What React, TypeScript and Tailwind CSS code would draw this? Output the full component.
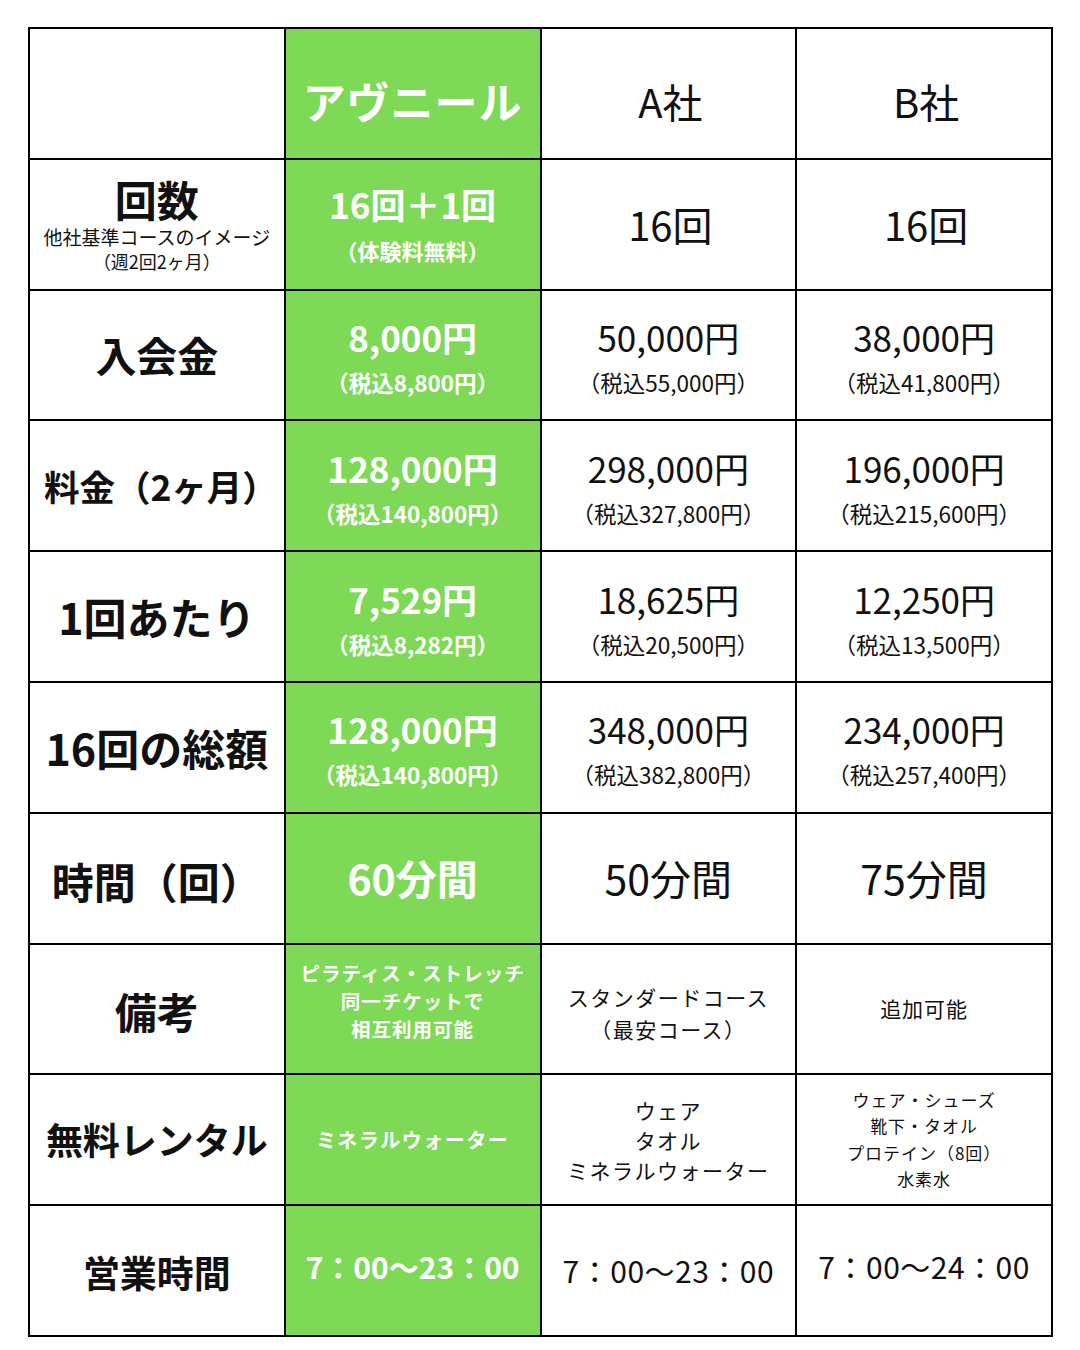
const font = { fontFamily: '"Noto Sans CJK JP", "Noto Sans", sans-serif' };

type Price = { main: string; sub: string };

const priceRows: { label: string; labelCls: string; ours: Price; oursCls?: string; a: Price; b: Price }[] = [
  {
    label: '入会金',
    labelCls: 'text-[41px]',
    ours: { main: '8,000円', sub: '（税込8,800円）' },
    oursCls: 'font-semibold',
    a: { main: '50,000円', sub: '（税込55,000円）' },
    b: { main: '38,000円', sub: '（税込41,800円）' },
  },
  {
    label: '料金（2ヶ月）',
    labelCls: 'text-[35.5px] pl-2',
    ours: { main: '128,000円', sub: '（税込140,800円）' },
    a: { main: '298,000円', sub: '（税込327,800円）' },
    b: { main: '196,000円', sub: '（税込215,600円）' },
  },
  {
    label: '1回あたり',
    labelCls: 'text-[43px]',
    ours: { main: '7,529円', sub: '（税込8,282円）' },
    a: { main: '18,625円', sub: '（税込20,500円）' },
    b: { main: '12,250円', sub: '（税込13,500円）' },
  },
  {
    label: '16回の総額',
    labelCls: 'text-[43px]',
    ours: { main: '128,000円', sub: '（税込140,800円）' },
    a: { main: '348,000円', sub: '（税込382,800円）' },
    b: { main: '234,000円', sub: '（税込257,400円）' },
  },
];

function Cell({ green, className = '', children }: { green?: boolean; className?: string; children?: React.ReactNode }) {
  return (
    <div
      className={`flex flex-col items-center justify-center text-center ${
        green ? 'bg-[#7ed957] text-white' : 'bg-white text-[#111]'
      } ${className}`}
    >
      {children}
    </div>
  );
}

function PriceCell({ p, green, cls = '' }: { p: Price; green?: boolean; cls?: string }) {
  return (
    <Cell green={green} className="pt-[10px]">
      <div className={`text-[35px] leading-[44px] ${green ? 'font-bold' : ''} ${cls}`}>{p.main}</div>
      <div className={`text-[22.5px] leading-[46px] ${green ? 'font-bold' : ''} ${cls}`}>{p.sub}</div>
    </Cell>
  );
}

export default function App() {
  return (
    <div className="w-[1080px] h-[1350px] bg-white pt-[27px] pl-[28px]" style={font}>
      <div className="grid grid-cols-4 grid-rows-[repeat(10,minmax(0,1fr))] gap-[2px] p-[2px] bg-black w-[1025px] h-[1310px]">
        {/* header */}
        <Cell />
        <Cell green className="pt-[14px]">
          <div className="text-[43px] font-bold tracking-[1px]">アヴニール</div>
        </Cell>
        <Cell className="pt-4 pl-1">
          <div className="text-[40px]">A社</div>
        </Cell>
        <Cell className="pt-4 pl-1">
          <div className="text-[40px]">B社</div>
        </Cell>

        {/* 回数 */}
        <Cell>
          <div className="text-[42px] font-bold leading-[50px]">回数</div>
          <div className="text-[19px] leading-[25px]">他社基準コースのイメージ</div>
          <div className="text-[18px] leading-[25px]">（週2回2ヶ月）</div>
        </Cell>
        <Cell green className="pt-2">
          <div className="text-[35px] font-bold leading-[44px]">16回＋1回</div>
          <div className="text-[22px] font-bold leading-[48px]">（体験料無料）</div>
        </Cell>
        <Cell className="pl-1">
          <div className="text-[40px]">16回</div>
        </Cell>
        <Cell className="pl-1">
          <div className="text-[40px]">16回</div>
        </Cell>

        {priceRows.map((r) => (
          <div key={r.label} className="contents">
            <Cell>
              <div className={`font-bold ${r.labelCls}`}>{r.label}</div>
            </Cell>
            <PriceCell p={r.ours} green cls={r.oursCls} />
            <PriceCell p={r.a} />
            <PriceCell p={r.b} />
          </div>
        ))}

        {/* 時間 */}
        <Cell className="pt-1">
          <div className="text-[42px] font-bold">時間（回）</div>
        </Cell>
        <Cell green>
          <div className="text-[41px] font-bold">60分間</div>
        </Cell>
        <Cell>
          <div className="text-[41px]">50分間</div>
        </Cell>
        <Cell>
          <div className="text-[41px]">75分間</div>
        </Cell>

        {/* 備考 */}
        <Cell className="pt-1">
          <div className="text-[42px] font-bold">備考</div>
        </Cell>
        <Cell green className="pb-4">
          <div className="text-[19.5px] font-bold leading-[28px] tracking-[1px]">
            ピラティス・ストレッチ
            <br />
            同一チケットで
            <br />
            相互利用可能
          </div>
        </Cell>
        <Cell className="pt-2">
          <div className="text-[21px] leading-[32px] tracking-[1.5px]">
            スタンダードコース
            <br />
            （最安コース）
          </div>
        </Cell>
        <Cell>
          <div className="text-[21px] tracking-[1px]">追加可能</div>
        </Cell>

        {/* 無料レンタル */}
        <Cell>
          <div className="text-[37px] font-bold">無料レンタル</div>
        </Cell>
        <Cell green>
          <div className="text-[20px] font-bold tracking-[1.5px]">ミネラルウォーター</div>
        </Cell>
        <Cell>
          <div className="text-[21px] leading-[30px] tracking-[1.5px]">
            ウェア
            <br />
            タオル
            <br />
            ミネラルウォーター
          </div>
        </Cell>
        <Cell>
          <div className="text-[17px] leading-[26.5px] tracking-[1px]">
            ウェア・シューズ
            <br />
            靴下・タオル
            <br />
            プロテイン（8回）
            <br />
            水素水
          </div>
        </Cell>

        {/* 営業時間 */}
        <Cell className="pt-1">
          <div className="text-[37px] font-bold">営業時間</div>
        </Cell>
        <Cell green className="pb-2">
          <div className="text-[30px] font-bold">7：00〜23：00</div>
        </Cell>
        <Cell>
          <div className="text-[30px] tracking-[0.5px]">7：00〜23：00</div>
        </Cell>
        <Cell className="pb-2">
          <div className="text-[30px] tracking-[0.5px]">7：00〜24：00</div>
        </Cell>
      </div>
    </div>
  );
}
